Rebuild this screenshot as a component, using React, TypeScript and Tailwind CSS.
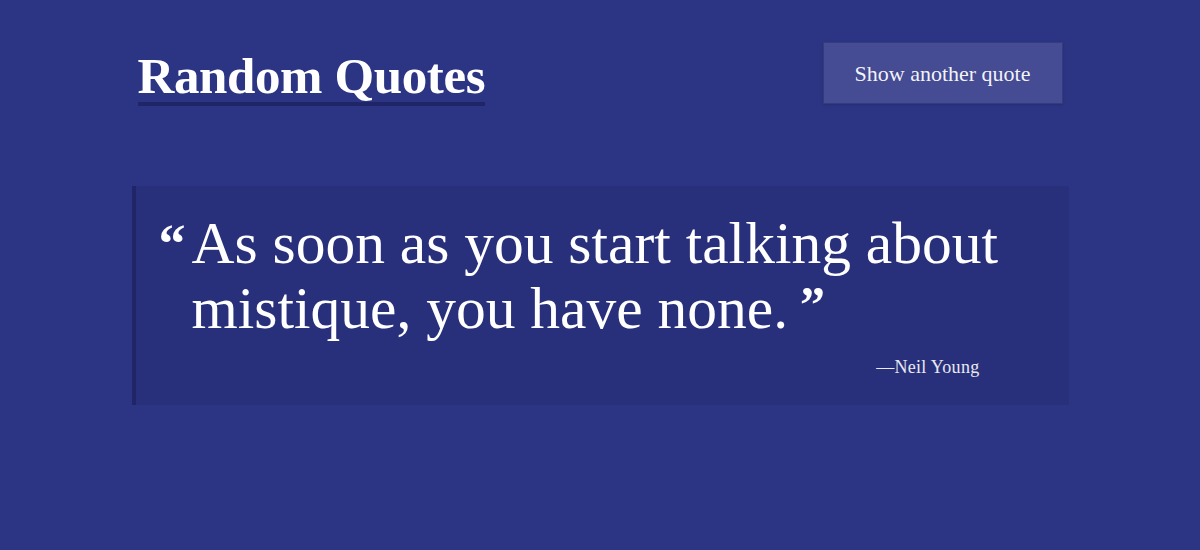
const quote = {
  text: "As soon as you start talking about mistique, you have none.",
  author: "Neil Young",
};

const App = () => {
  return (
    <div
      className="min-h-[550px] w-full bg-[#2b3584] text-white"
      style={{ fontFamily: '"Liberation Serif", "DejaVu Serif", serif' }}
    >
      <div className="mx-auto w-[925px] pt-[42px]">
        {/* Header */}
        <header className="flex items-start justify-between">
          <h1 className="mt-[9px] border-b-4 border-[#1f2566] pb-[1px] text-[51px] font-bold leading-[50px] tracking-[-0.4px]">
            Random Quotes
          </h1>
          <button className="h-[62px] w-[240px] border border-[#353c7c] bg-[#454c93] text-[22px] text-white/95 shadow-sm">
            Show another quote
          </button>
        </header>

        {/* Quote */}
        <blockquote className="-mx-[6px] mt-[80px] h-[219px] border-l-4 border-[#1f2566] bg-[#282f7b] pt-[25px]">
          <div className="flex">
            <span className="w-[56px] shrink-0 pt-[13px] pr-[6px] text-right text-[54px] font-bold leading-[40px]">
              “
            </span>
            <p className="w-[830px] text-[59.5px] leading-[65px]">
              {quote.text}
              <span className="relative -top-[7px] ml-[12px] text-[50px] font-bold leading-[20px]">”</span>
            </p>
          </div>
          <p className="mt-[13px] pr-[89px] text-right text-[18px] tracking-[0.3px] text-white/90">
            —{quote.author}
          </p>
        </blockquote>
      </div>
    </div>
  );
};

export default App;
